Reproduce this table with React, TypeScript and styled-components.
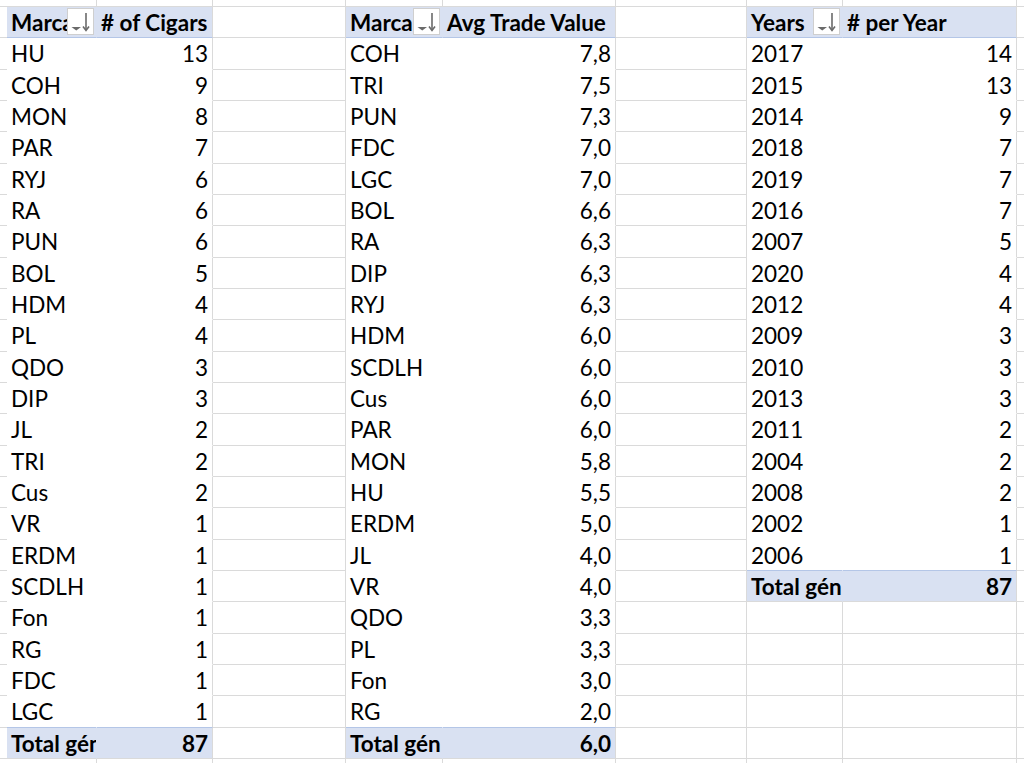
import React from "react";
import styled, { createGlobalStyle } from "styled-components";

const GlobalStyle = createGlobalStyle`
  html, body { margin: 0; padding: 0; background: #ffffff; }
  body { font-family: Lato, "Open Sans", sans-serif; color: #000; }
`;

type Kind = "plain" | "head" | "body" | "total";

const GRID = "#dadada";
const HEAD_BG = "#d9e1f2";
const BLUE_LINE = "#b4c6e7";
const ROW_H = 31.333;

const Sheet = styled.div`
  display: grid;
  grid-template-columns: 7px 90px 116px 133px 97px 173px 131px 96px 174px 7px;
  grid-template-rows: 7px repeat(25, ${ROW_H}px);
  width: 1024px;
  height: 763px;
  overflow: hidden;
`;

const Cell = styled.div<{
  $kind: Kind;
  $num?: boolean;
  $last?: boolean;
  $preTotal?: boolean;
  $sel?: boolean;
}>`
  position: relative;
  box-sizing: border-box;
  display: flex;
  align-items: center;
  justify-content: ${(p) => (p.$num ? "flex-end" : "flex-start")};
  padding: 1px 4px 0 4px;
  overflow: hidden;
  white-space: nowrap;
  font-size: 22.5px;
  line-height: 29px;
  font-weight: ${(p) => (p.$kind === "head" || p.$kind === "total" ? 700 : 400)};
  background: ${(p) => (p.$kind === "head" || p.$kind === "total" ? HEAD_BG : "#ffffff")};
  border-right: ${(p) =>
    p.$sel
      ? "2px solid #217346"
      : `1px solid ${
          p.$kind === "plain" || p.$last
            ? GRID
            : p.$kind === "body"
            ? "#ffffff"
            : HEAD_BG
        }`};
  border-bottom: 1px solid
    ${(p) =>
      p.$kind === "head" || p.$preTotal
        ? BLUE_LINE
        : p.$kind === "body"
        ? "#ffffff"
        : GRID};
`;

const DropButton = styled.div`
  position: absolute;
  right: 2px;
  top: 1px;
  width: 27px;
  height: 27px;
  box-sizing: border-box;
  background: #ffffff;
  border: 1px solid #cfcfcf;
  display: flex;
  align-items: center;
  justify-content: center;
`;

const SortIcon = () => (
  <svg width="25" height="25" viewBox="0 0 25 25">
    <polygon points="3.5,18 13,18 8.25,21.5" fill="#6a6a6a" />
    <line x1="18" y1="4" x2="18" y2="21" stroke="#6a6a6a" strokeWidth="1.6" />
    <polyline points="15,17.5 18,21.5 21,17.5" fill="none" stroke="#6a6a6a" strokeWidth="1.6" />
  </svg>
);

type Table = {
  col: number;
  heads: [string, string];
  rows: [string, string][];
  total: string;
};

const tables: Table[] = [
  {
    col: 1,
    heads: ["Marca", "# of Cigars"],
    rows: [
      ["HU", "13"], ["COH", "9"], ["MON", "8"], ["PAR", "7"], ["RYJ", "6"], ["RA", "6"],
      ["PUN", "6"], ["BOL", "5"], ["HDM", "4"], ["PL", "4"], ["QDO", "3"], ["DIP", "3"],
      ["JL", "2"], ["TRI", "2"], ["Cus", "2"], ["VR", "1"], ["ERDM", "1"], ["SCDLH", "1"],
      ["Fon", "1"], ["RG", "1"], ["FDC", "1"], ["LGC", "1"],
    ],
    total: "87",
  },
  {
    col: 4,
    heads: ["Marca", "Avg Trade Value"],
    rows: [
      ["COH", "7,8"], ["TRI", "7,5"], ["PUN", "7,3"], ["FDC", "7,0"], ["LGC", "7,0"],
      ["BOL", "6,6"], ["RA", "6,3"], ["DIP", "6,3"], ["RYJ", "6,3"], ["HDM", "6,0"],
      ["SCDLH", "6,0"], ["Cus", "6,0"], ["PAR", "6,0"], ["MON", "5,8"], ["HU", "5,5"],
      ["ERDM", "5,0"], ["JL", "4,0"], ["VR", "4,0"], ["QDO", "3,3"], ["PL", "3,3"],
      ["Fon", "3,0"], ["RG", "2,0"],
    ],
    total: "6,0",
  },
  {
    col: 7,
    heads: ["Years", "# per Year"],
    rows: [
      ["2017", "14"], ["2015", "13"], ["2014", "9"], ["2018", "7"], ["2019", "7"],
      ["2016", "7"], ["2007", "5"], ["2020", "4"], ["2012", "4"], ["2009", "3"],
      ["2010", "3"], ["2013", "3"], ["2011", "2"], ["2004", "2"], ["2008", "2"],
      ["2002", "1"], ["2006", "1"],
    ],
    total: "87",
  },
];

const ROWS = 26;
const COLS = 10;
const SELECTED_ROW = 16;

function renderCell(r: number, c: number) {
  const key = `${r}-${c}`;
  for (const t of tables) {
    if (c !== t.col && c !== t.col + 1) continue;
    const second = c === t.col + 1;
    const n = t.rows.length;
    if (r === 1) {
      return (
        <Cell key={key} $kind="head" $last={second}>
          {t.heads[second ? 1 : 0]}
          {!second && (
            <DropButton>
              <SortIcon />
            </DropButton>
          )}
        </Cell>
      );
    }
    if (r >= 2 && r <= n + 1) {
      const row = t.rows[r - 2];
      return (
        <Cell key={key} $kind="body" $num={second} $last={second} $preTotal={r === n + 1}>
          {row[second ? 1 : 0]}
        </Cell>
      );
    }
    if (r === n + 2) {
      return (
        <Cell key={key} $kind="total" $num={second} $last={second}>
          {second ? t.total : "Total gén"}
        </Cell>
      );
    }
  }
  return <Cell key={key} $kind="plain" $sel={c === 0 && r === SELECTED_ROW} />;
}

export default function App() {
  const cells: React.ReactNode[] = [];
  for (let r = 0; r < ROWS; r++) {
    for (let c = 0; c < COLS; c++) {
      cells.push(renderCell(r, c));
    }
  }
  return (
    <>
      <GlobalStyle />
      <Sheet>{cells}</Sheet>
    </>
  );
}
